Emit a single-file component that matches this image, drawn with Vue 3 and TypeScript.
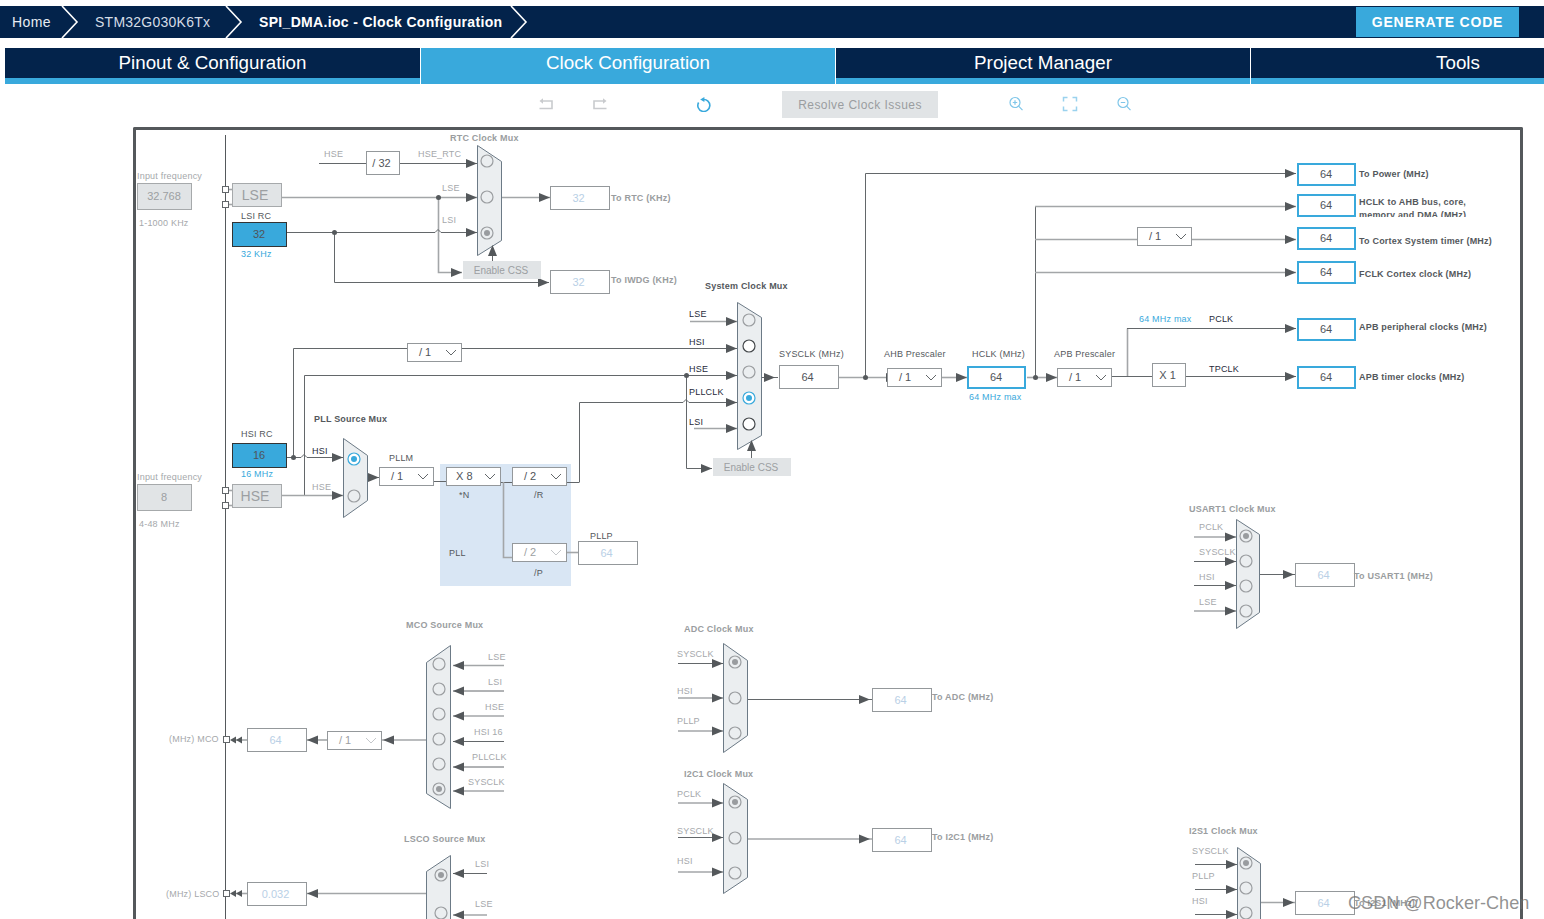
<template>
  <div class="page">
    <header class="crumbs">
      <div class="crumb crumb--home">Home</div>
      <svg class="chev" viewBox="0 0 18 32"><path d="M1 0 L16 16 L1 32" /></svg>
      <div class="crumb crumb--chip">STM32G030K6Tx</div>
      <svg class="chev" viewBox="0 0 18 32"><path d="M1 0 L16 16 L1 32" /></svg>
      <div class="crumb crumb--file">SPI_DMA.ioc - Clock Configuration</div>
      <svg class="chev" viewBox="0 0 18 32"><path d="M1 0 L16 16 L1 32" /></svg>
      <button class="generate">GENERATE CODE</button>
    </header>

    <nav class="tabs">
      <div
        v-for="tab in tabs"
        :key="tab"
        class="tab"
        :class="{ 'tab--active': tab === 'Clock Configuration' }"
      >
        {{ tab }}
      </div>
    </nav>

    <div class="toolbar">
      <svg class="tool tool--undo" viewBox="0 0 16 16"><path d="M4 5 H14 V12.5 H1.5" /><polygon points="1.5,5 5,2.2 5,7.8" /></svg>
      <svg class="tool tool--redo" viewBox="0 0 16 16"><path d="M12 5 H2 V12.5 H14.5" /><polygon points="14.5,5 11,2.2 11,7.8" /></svg>
      <svg class="tool tool--reload" viewBox="0 0 16 16"><path d="M7 3.5 A6 6 0 1 1 2.6 6.5" /><polygon points="4.2,3.5 8.4,1 8.4,6" /></svg>
      <button class="resolve">Resolve Clock Issues</button>
      <svg class="tool tool--zoom" viewBox="0 0 16 16"><circle cx="7" cy="6.5" r="5" /><path d="M10.6 10.2 L14.5 14.2 M4.8 6.5 H9.2 M7 4.3 V8.7" /></svg>
      <svg class="tool tool--fit" viewBox="0 0 16 16"><path d="M1.5 5.5 V1.5 H5.5 M10.5 1.5 H14.5 V5.5 M14.5 10.5 V14.5 H10.5 M5.5 14.5 H1.5 V10.5" /></svg>
      <svg class="tool tool--out" viewBox="0 0 16 16"><circle cx="7" cy="6.5" r="5" /><path d="M10.6 10.2 L14.5 14.2 M4.8 6.5 H9.2" /></svg>
    </div>

    <main class="frame">
      <svg class="diagram" width="1384" height="789" viewBox="136 130 1384 789">
        <defs>
          <clipPath id="ahb-clip"><rect x="1357" y="195" width="160" height="22" /></clipPath>
        </defs>

        <rect class="pll-area" x="440" y="464" width="131" height="122" />
        <line class="rail" x1="225.5" y1="135" x2="225.5" y2="919" />

        <path v-for="(w, i) in wires" :key="'w' + i" class="wire" :class="'wire--' + w.kind" :d="w.d" />
        <circle v-for="(d, i) in dots" :key="'d' + i" class="dot" :cx="d[0]" :cy="d[1]" r="2.5" />

        <g v-for="(m, i) in muxes" :key="'m' + i">
          <polygon class="mux" :points="m.points" />
          <g v-for="(c, j) in m.circles" :key="j">
            <circle class="radio" :class="'radio--' + c.s" :cx="m.x" :cy="c.y" r="6" />
            <circle v-if="c.s === 'sel' || c.s === 'blue'" class="radio-dot" :class="'radio-dot--' + c.s" :cx="m.x" :cy="c.y" r="3" />
          </g>
        </g>

        <polygon v-for="(a, i) in arrows" :key="'a' + i" class="arrow" :points="a" />

        <rect v-for="(p, i) in ports" :key="'p' + i" class="port" :x="p[0] + 0.5" :y="p[1] + 0.5" width="6" height="6" />

        <g v-for="(b, i) in boxes" :key="'b' + i">
          <rect class="box" :class="'box--' + b.kind" :x="b.x + 0.5" :y="b.y + 0.5" :width="b.w" :height="b.h" />
          <text
            class="box-text"
            :class="'box-text--' + b.tone"
            :x="b.x + b.w / 2 - (b.kind === 'plain' ? 1 : 0)"
            :y="b.y + b.h / 2 + 4"
            text-anchor="middle"
          >{{ b.text }}</text>
        </g>

        <g v-for="(s, i) in selects" :key="'s' + i">
          <rect class="box box--plain" :x="s.x + 0.5" :y="s.y + 0.5" width="54" height="18" />
          <text class="sel-text" :class="{ 'sel-text--off': s.off }" :x="s.x + (s.text === 'X 8' ? 10 : 12)" :y="s.y + 13">{{ s.text }}</text>
          <path class="sel-chev" :class="{ 'sel-chev--off': s.off }" :d="`M${s.x + 39} ${s.y + 7} l5 5 l5 -5`" />
        </g>

        <g v-for="b in flatButtons" :key="b.y">
          <rect class="flat-btn" :x="b.x" :y="b.y" width="78" height="18" />
          <text class="flat-text" :x="b.x + 38" :y="b.y + 13" text-anchor="middle">Enable CSS</text>
        </g>
        <rect class="box box--grey" x="232.5" y="183.5" width="49" height="23" />
        <text class="big-text" x="255" y="200" text-anchor="middle">LSE</text>
        <rect class="box box--grey" x="232.5" y="484.5" width="49" height="23" />
        <text class="big-text" x="255" y="501" text-anchor="middle">HSE</text>

        <text
          v-for="(l, i) in labels"
          :key="'l' + i"
          class="lbl"
          :class="'lbl--' + l[3]"
          :x="l[0]"
          :y="l[1]"
        >{{ l[2] }}</text>
        <text class="lbl lbl--out" x="1359" y="205">HCLK to AHB bus, core,</text>
        <text class="lbl lbl--out" x="1359" y="218" clip-path="url(#ahb-clip)">memory and DMA (MHz)</text>

        <text class="mark" x="1348" y="909">CSDN @Rocker-Chen</text>
      </svg>
    </main>
  </div>
</template>

<script setup lang="ts">
type Wire = { d: string; kind: 'dark' | 'light' }
type Box = { x: number; y: number; w: number; h: number; text: string; kind: string; tone: string }
type Radio = { y: number; s: 'dark' | 'gray' | 'sel' | 'blue' }
type Mux = { points: string; x: number; circles: Radio[] }

const tabs = ['Pinout & Configuration', 'Clock Configuration', 'Project Manager', 'Tools']

const dark = (d: string): Wire => ({ d, kind: 'dark' })
const light = (d: string): Wire => ({ d, kind: 'light' })

const wires: Wire[] = [
  // RTC / IWDG
  dark('M319 163.5 H477'),
  light('M282 197.5 H477'),
  light('M438.5 197 V272.5 H462'),
  dark('M287 232.5 H435 l3 -3 l3 3 H477'),
  dark('M334.5 232 V282.5 H549'),
  light('M501 197.5 H550'),
  dark('M492.5 261 V245'),
  // system clock inputs
  light('M690 321.5 H737'),
  dark('M293.5 457 V348.5 H737'),
  dark('M304.5 495 V375.5 H737'),
  dark('M579.5 482 V402.5 H683 l3 -3 l3 3 H737'),
  light('M694 428.5 H737'),
  dark('M686.5 375 V468.5 H712'),
  dark('M751.5 458 V440'),
  dark('M761 377.5 H778'),
  // AHB / APB chain
  light('M839 377.5 H887'),
  dark('M865.5 377 V173.5 H1296'),
  light('M942 377.5 H968'),
  light('M1027 377.5 H1057'),
  dark('M1035.5 377 V206.5'),
  light('M1035 206.5 H1296'),
  light('M1035 239.5 H1296'),
  light('M1035 272.5 H1296'),
  dark('M1112 376.5 H1296'),
  light('M1127.5 376 V328.5'),
  dark('M1127 328.5 H1296'),
  // PLL
  dark('M287 457.5 H301 l3 -3 l3 3 H343'),
  light('M282 495.5 H343'),
  dark('M367 477.5 H379'),
  dark('M434 481.5 H446'),
  dark('M501 482.5 H512'),
  dark('M567 482.5 H579.5'),
  light('M503.5 482 V557.5 H512'),
  light('M567 552.5 H578'),
  // USART1
  light('M1194 537 H1236'),
  dark('M1194 561.5 H1236'),
  dark('M1194 585.5 H1236'),
  light('M1194 611 H1236'),
  dark('M1259 574.5 H1295'),
  // I2S1
  dark('M1195 864.5 H1237'),
  dark('M1195 889.5 H1237'),
  dark('M1195 914.5 H1237'),
  light('M1260 902.5 H1295'),
  // ADC
  dark('M678 663.5 H723'),
  light('M678 698 H723'),
  light('M678 731 H723'),
  dark('M747 699.5 H872'),
  // I2C1
  light('M678 803 H723'),
  dark('M678 837.5 H723'),
  light('M678 872 H723'),
  light('M747 839 H872'),
  // MCO
  light('M453 665.5 H504'),
  dark('M453 691 H504'),
  light('M453 716 H504'),
  dark('M453 741.5 H504'),
  dark('M453 767 H504'),
  light('M453 791 H504'),
  light('M427 740 H382'),
  light('M327 740 H307'),
  light('M247 740 H232'),
  // LSCO
  dark('M453 873.5 H487'),
  light('M453 915 H487'),
  light('M427 893.5 H307'),
  light('M247 893.5 H232'),
  // port stubs
  light('M229 189.5 H232'),
  light('M229 204.5 H232'),
  light('M229 490.5 H232'),
  light('M229 505.5 H232'),
]

const dots: number[][] = [
  [438.5, 197.5], [334.5, 232.5], [293.5, 457.5], [686.5, 375.5], [865.5, 377.5], [1035.5, 377.5],
]

const right = (x: number, y: number) => `${x},${y} ${x - 11},${y - 4.5} ${x - 11},${y + 4.5}`
const left = (x: number, y: number) => `${x},${y} ${x + 11},${y - 4.5} ${x + 11},${y + 4.5}`
const up = (x: number, y: number) => `${x},${y} ${x - 4.5},${y + 11} ${x + 4.5},${y + 11}`
const tiny = (x: number, y: number) => `${x},${y} ${x + 6},${y - 3.5} ${x + 6},${y + 3.5}`

const arrows: string[] = [
  ...[
    [477, 163.5], [477, 197.5], [477, 232.5], [462, 272.5], [549, 282.5], [550, 197.5],
    [737, 321.5], [737, 348.5], [737, 375.5], [737, 402.5], [737, 428.5], [712, 468.5], [775, 377.5],
    [897, 377.5], [967, 377.5], [1057, 377.5], [1296, 173.5], [1296, 206.5], [1296, 239.5], [1296, 272.5],
    [1296, 328.5], [1296, 376.5], [343, 457.5], [343, 495.5], [379, 477.5],
    [1236, 537], [1236, 561.5], [1236, 585.5], [1236, 611], [1294, 574.5],
    [1237, 864.5], [1237, 889.5], [1237, 914.5], [1294, 902.5],
    [723, 663.5], [723, 698], [723, 731], [870, 699.5],
    [723, 803], [723, 837.5], [723, 872], [870, 839],
  ].map(([x, y]) => right(x, y)),
  ...[
    [453, 665.5], [453, 691], [453, 716], [453, 741.5], [453, 767], [453, 791],
    [383, 740], [307, 740],
    [453, 873.5], [453, 915], [307, 893.5],
  ].map(([x, y]) => left(x, y)),
  tiny(230, 740), tiny(236, 740), tiny(230, 893.5), tiny(236, 893.5),
  up(492.5, 245),
  up(751.5, 440),
]

const muxes: Mux[] = [
  { points: '477.5,145.5 501.5,161.5 501.5,240.5 477.5,255.5', x: 487, circles: [{ y: 161, s: 'gray' }, { y: 197, s: 'gray' }, { y: 233, s: 'sel' }] },
  { points: '737.5,302.5 761.5,317.5 761.5,435.5 737.5,449.5', x: 749, circles: [{ y: 320, s: 'gray' }, { y: 346, s: 'dark' }, { y: 372, s: 'gray' }, { y: 398, s: 'blue' }, { y: 424, s: 'dark' }] },
  { points: '343.5,438.5 367.5,455.5 367.5,500.5 343.5,517.5', x: 354, circles: [{ y: 459, s: 'blue' }, { y: 496, s: 'gray' }] },
  { points: '1236.5,519.5 1259.5,534.5 1259.5,612.5 1236.5,628.5', x: 1246, circles: [{ y: 536, s: 'sel' }, { y: 561, s: 'gray' }, { y: 586, s: 'gray' }, { y: 611, s: 'gray' }] },
  { points: '1237.5,847.5 1260.5,863.5 1260.5,935.5 1237.5,950.5', x: 1246, circles: [{ y: 863, s: 'sel' }, { y: 888, s: 'gray' }, { y: 913, s: 'gray' }] },
  { points: '723.5,643.5 747.5,660.5 747.5,735.5 723.5,752.5', x: 735, circles: [{ y: 662, s: 'sel' }, { y: 698, s: 'gray' }, { y: 733, s: 'gray' }] },
  { points: '723.5,783.5 747.5,799.5 747.5,877.5 723.5,893.5', x: 735, circles: [{ y: 802, s: 'sel' }, { y: 838, s: 'gray' }, { y: 873, s: 'gray' }] },
  { points: '450.5,645.5 426.5,662.5 426.5,793.5 450.5,808.5', x: 439, circles: [{ y: 664, s: 'gray' }, { y: 689, s: 'gray' }, { y: 714, s: 'gray' }, { y: 739, s: 'gray' }, { y: 764, s: 'gray' }, { y: 789, s: 'sel' }] },
  { points: '450.5,855.5 426.5,871.5 426.5,935.5 450.5,950.5', x: 441, circles: [{ y: 875, s: 'sel' }, { y: 913, s: 'gray' }] },
]

const ports: number[][] = [[222, 186], [222, 201], [222, 487], [222, 502], [223, 736], [223, 890]]

const out = (top: number): Box => ({ x: 1297.5, y: top + 0.5, w: 57, h: 21, text: '64', kind: 'blue', tone: 'on' })
const off = (x: number, y: number, text = '64'): Box => ({ x, y, w: 59, h: 23, text, kind: 'plain', tone: 'off' })

const boxes: Box[] = [
  { x: 137, y: 183, w: 54, h: 26, text: '32.768', kind: 'grey', tone: 'grey' },
  { x: 137, y: 484, w: 54, h: 26, text: '8', kind: 'grey', tone: 'grey' },
  { x: 232, y: 222, w: 54, h: 24, text: '32', kind: 'solid', tone: 'on' },
  { x: 232, y: 443, w: 54, h: 24, text: '16', kind: 'solid', tone: 'on' },
  { x: 366, y: 151, w: 33, h: 23, text: '/ 32', kind: 'plain', tone: 'on' },
  off(550, 186, '32'),
  off(550, 270, '32'),
  off(578, 541),
  { x: 779, y: 365, w: 59, h: 23, text: '64', kind: 'plain', tone: 'on' },
  { x: 967.5, y: 366.5, w: 57, h: 21, text: '64', kind: 'blue', tone: 'on' },
  { x: 1152, y: 363, w: 33, h: 23, text: 'X 1', kind: 'plain', tone: 'on' },
  out(163), out(194), out(227), out(261), out(318), out(366),
  off(1295, 563),
  off(1295, 891),
  off(872, 688),
  off(872, 828),
  off(247, 728),
  off(247, 882, '0.032'),
]

const selects = [
  { x: 407, y: 343, text: '/ 1' },
  { x: 887, y: 368, text: '/ 1' },
  { x: 1057, y: 368, text: '/ 1' },
  { x: 1137, y: 227, text: '/ 1' },
  { x: 379, y: 467, text: '/ 1' },
  { x: 446, y: 467, text: 'X 8' },
  { x: 512, y: 467, text: '/ 2' },
  { x: 512, y: 543, text: '/ 2', off: true },
  { x: 327, y: 731, text: '/ 1', off: true },
]

const flatButtons = [{ x: 463, y: 261 }, { x: 713, y: 458 }]

// x, y, text, tone
const labels: [number, number, string, string][] = [
  [137, 179, 'Input frequency', 'soft'],
  [139, 226, '1-1000 KHz', 'soft'],
  [241, 219, 'LSI RC', 'ink'],
  [241, 257, '32 KHz', 'blue'],
  [324, 157, 'HSE', 'soft'],
  [418, 157, 'HSE_RTC', 'soft'],
  [450, 141, 'RTC Clock Mux', 'title'],
  [442, 191, 'LSE', 'soft'],
  [442, 223, 'LSI', 'soft'],
  [611, 201, 'To RTC (KHz)', 'offout'],
  [611, 283, 'To IWDG (KHz)', 'offout'],
  [705, 289, 'System Clock Mux', 'titledark'],
  [689, 317, 'LSE', 'black'],
  [689, 345, 'HSI', 'black'],
  [689, 372, 'HSE', 'black'],
  [689, 395, 'PLLCLK', 'black'],
  [689, 425, 'LSI', 'black'],
  [779, 357, 'SYSCLK (MHz)', 'ink'],
  [884, 357, 'AHB Prescaler', 'ink'],
  [972, 357, 'HCLK (MHz)', 'ink'],
  [969, 400, '64 MHz max', 'blue'],
  [1054, 357, 'APB Prescaler', 'ink'],
  [1139, 322, '64 MHz max', 'blue'],
  [1209, 322, 'PCLK', 'black'],
  [1209, 372, 'TPCLK', 'black'],
  [1359, 177, 'To Power (MHz)', 'out'],
  [1359, 244, 'To Cortex System timer (MHz)', 'out'],
  [1359, 277, 'FCLK Cortex clock (MHz)', 'out'],
  [1359, 330, 'APB peripheral clocks (MHz)', 'out'],
  [1359, 380, 'APB timer clocks (MHz)', 'out'],
  [314, 422, 'PLL  Source Mux', 'titledark'],
  [241, 437, 'HSI RC', 'ink'],
  [241, 477, '16 MHz', 'blue'],
  [137, 480, 'Input frequency', 'soft'],
  [139, 527, '4-48 MHz', 'soft'],
  [312, 454, 'HSI', 'black'],
  [312, 490, 'HSE', 'soft'],
  [389, 461, 'PLLM', 'ink'],
  [459, 498, '*N', 'ink'],
  [534, 498, '/R', 'ink'],
  [449, 556, 'PLL', 'ink'],
  [590, 539, 'PLLP', 'ink'],
  [534, 576, '/P', 'ink'],
  [1189, 512, 'USART1 Clock Mux', 'title'],
  [1199, 530, 'PCLK', 'soft'],
  [1199, 555, 'SYSCLK', 'soft'],
  [1199, 580, 'HSI', 'soft'],
  [1199, 605, 'LSE', 'soft'],
  [1354, 579, 'To USART1 (MHz)', 'offout'],
  [1189, 834, 'I2S1 Clock Mux', 'title'],
  [1192, 854, 'SYSCLK', 'soft'],
  [1192, 879, 'PLLP', 'soft'],
  [1192, 904, 'HSI', 'soft'],
  [1354, 906, 'To I2S1 (MHz)', 'offout'],
  [684, 632, 'ADC Clock Mux', 'title'],
  [677, 657, 'SYSCLK', 'soft'],
  [677, 694, 'HSI', 'soft'],
  [677, 724, 'PLLP', 'soft'],
  [932, 700, 'To ADC (MHz)', 'offout'],
  [684, 777, 'I2C1 Clock Mux', 'title'],
  [677, 797, 'PCLK', 'soft'],
  [677, 834, 'SYSCLK', 'soft'],
  [677, 864, 'HSI', 'soft'],
  [932, 840, 'To I2C1 (MHz)', 'offout'],
  [406, 628, 'MCO  Source Mux', 'title'],
  [488, 660, 'LSE', 'soft'],
  [488, 685, 'LSI', 'soft'],
  [485, 710, 'HSE', 'soft'],
  [474, 735, 'HSI 16', 'soft'],
  [472, 760, 'PLLCLK', 'soft'],
  [468, 785, 'SYSCLK', 'soft'],
  [169, 742, '(MHz) MCO', 'soft'],
  [404, 842, 'LSCO Source Mux', 'title'],
  [475, 867, 'LSI', 'soft'],
  [475, 907, 'LSE', 'soft'],
  [166, 897, '(MHz) LSCO', 'soft'],
]
</script>

<style>
html,
body {
  margin: 0;
  height: 919px;
  overflow: hidden;
  background: #fff;
}
</style>

<style scoped>
.page {
  width: 1544px;
  height: 919px;
  padding-top: 6px;
  box-sizing: border-box;
  overflow: hidden;
  font-family: "Liberation Sans", Arial, sans-serif;
}

.crumbs {
  display: flex;
  align-items: center;
  height: 32px;
  background: #03234b;
  color: #fff;
  font-size: 14px;
}

.crumb--home {
  margin-left: 12px;
  width: 49px;
  color: #e8edf3;
  letter-spacing: 0.4px;
}

.crumb--chip {
  margin-left: 16px;
  width: 130px;
  color: #d5dde6;
  letter-spacing: 0.25px;
}

.crumb--file {
  margin-left: 16px;
  width: 251px;
  font-weight: 700;
  letter-spacing: 0.33px;
  white-space: nowrap;
}

.chev {
  width: 18px;
  height: 32px;
  flex: none;
}

.chev path {
  fill: none;
  stroke: #fff;
  stroke-width: 1.6;
}

.generate {
  margin-left: auto;
  margin-right: 25px;
  width: 163px;
  height: 30px;
  border: 0;
  background: #39a9dc;
  color: #fff;
  font: 700 14px "Liberation Sans", Arial, sans-serif;
  letter-spacing: 0.8px;
}

.tabs {
  display: grid;
  grid-template-columns: 415px 414px 414px 414px;
  column-gap: 1px;
  margin: 10px 0 0 5px;
  height: 36px;
  overflow: hidden;
  background: #fff;
}

.tab {
  height: 30px;
  line-height: 30px;
  text-align: center;
  background: #03234b;
  color: #fff;
  font-size: 18.8px;
  border-bottom: 6px solid #39a9dc;
}

.tab--active {
  background: #39a9dc;
}

.toolbar {
  display: flex;
  align-items: center;
  height: 41px;
  padding: 0 0 2px 538px;
}

.tool {
  width: 16px;
  height: 16px;
  flex: none;
  margin-bottom: 1px;
  fill: none;
  stroke-width: 1.2;
}

.tool--undo,
.tool--redo {
  stroke: #c9cbce;
  stroke-width: 1.6;
}

.tool--undo polygon,
.tool--redo polygon {
  fill: #c9cbce;
  stroke: none;
}

.tool--redo {
  margin-left: 38px;
}

.tool--reload {
  margin-left: 88px;
  stroke: #39a9dc;
  stroke-width: 1.6;
}

.tool--reload polygon {
  fill: #39a9dc;
  stroke: none;
}

.tool--zoom,
.tool--fit,
.tool--out {
  stroke: #7fc6e9;
  margin-left: 38px;
}

.tool--fit {
  stroke: #9ad2ee;
  stroke-width: 1.5;
}

.tool--zoom {
  margin-left: 70px;
}

.resolve {
  margin-left: 70px;
  width: 156px;
  height: 27px;
  border: 0;
  background: #e1e4e6;
  color: #9a9da0;
  font: 12px "Liberation Sans", Arial, sans-serif;
  letter-spacing: 0.45px;
}

.frame {
  width: 1390px;
  height: 792px;
  margin-left: 133px;
  box-sizing: border-box;
  border: 3px solid #54585b;
  border-bottom: 0;
  border-radius: 2px 2px 0 0;
}

.diagram {
  display: block;
  overflow: visible;
  font-family: "Liberation Sans", Arial, sans-serif;
}

.pll-area {
  fill: #d9e6f4;
}

.rail {
  stroke: #55595c;
}

.wire {
  fill: none;
}

.wire--dark {
  stroke: #63676a;
}

.wire--light {
  stroke: #a3a6a8;
  stroke-width: 1.6;
}

.dot {
  fill: #55595c;
}

.arrow {
  fill: #54585b;
}

.mux {
  fill: #ebeef0;
  stroke: #6c7a86;
}

.radio {
  fill: #ebeef0;
  stroke: #9b9ea1;
  stroke-width: 1.2;
}

.radio--dark {
  fill: #fff;
  stroke: #44484b;
}

.radio--blue {
  fill: #fff;
  stroke: #39a9dc;
}

.radio-dot--sel {
  fill: #999c9f;
}

.radio-dot--blue {
  fill: #39a9dc;
}

.port {
  fill: #fff;
  stroke: #63676a;
}

.box {
  fill: #fff;
  stroke: #94989b;
}

.box--blue {
  stroke: #39a9dc;
  stroke-width: 2;
}

.box--grey {
  fill: #e1e4e6;
  stroke: #a6a9ab;
}

.box--solid {
  fill: #39a9dc;
  stroke: #333;
}

.box-text {
  font-size: 11px;
}

.box-text--on {
  fill: #50545a;
}

.box-text--off {
  fill: #b9d0e6;
}

.box-text--grey {
  fill: #9c9fa2;
}

.sel-text {
  font-size: 11px;
  fill: #50545a;
}

.sel-text--off {
  fill: #9c9fa2;
}

.sel-chev {
  fill: none;
  stroke: #63676a;
}

.sel-chev--off {
  stroke: #c4c7ca;
}

.flat-btn {
  fill: #e1e4e6;
}

.flat-text {
  font-size: 10px;
  fill: #9c9fa2;
}

.big-text {
  font-size: 14px;
  fill: #9c9fa2;
}

.lbl {
  font-size: 9px;
  letter-spacing: 0.2px;
}

.lbl--soft {
  fill: #a5a8ab;
}

.lbl--ink {
  fill: #54585c;
}

.lbl--black {
  fill: #1f2a3a;
}

.lbl--blue {
  fill: #39a9dc;
}

.lbl--title,
.lbl--offout {
  fill: #9a9da0;
  font-weight: 700;
}

.lbl--titledark,
.lbl--out {
  fill: #54585c;
  font-weight: 700;
}

.mark {
  font-size: 18.1px;
  fill: rgba(110, 110, 110, 0.75);
}
</style>
